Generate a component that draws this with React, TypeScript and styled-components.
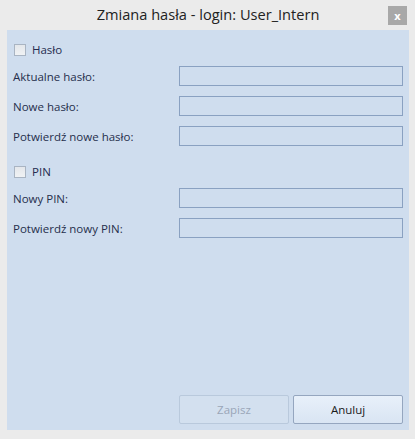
import * as React from 'react';
import styled, { createGlobalStyle } from 'styled-components';

const GlobalStyle = createGlobalStyle`
    html, body {
        margin: 0;
        padding: 0;
        background: #ebebeb;
    }
    body {
        font-family: "Open Sans", "Noto Sans", sans-serif;
    }
`;

const Window = styled.div`
    width: 415px;
    height: 439px;
    background: #ebebeb;
    display: flex;
    flex-direction: column;
    box-sizing: border-box;
    padding: 0 6px 9px 7px;
`;

const TitleBar = styled.div`
    height: 30px;
    display: flex;
    align-items: center;
    justify-content: center;
    position: relative;
`;

const Title = styled.span`
    font-size: 14.6px;
    color: #222222;
    margin-top: -2px;
`;

const CloseButton = styled.div`
    position: absolute;
    right: 2px;
    top: 6px;
    width: 19px;
    height: 19px;
    background: #a8a8a8;
    color: #ffffff;
    font-size: 11px;
    font-weight: 700;
    display: flex;
    align-items: center;
    justify-content: center;
    line-height: 1;
`;

const Panel = styled.div`
    flex: 1;
    background: #cfddee;
    display: flex;
    flex-direction: column;
    padding: 0 6px 6px 6px;
`;

const Section = styled.div<{ $top: number }>`
    display: flex;
    flex-direction: column;
    margin-top: ${p => p.$top}px;
`;

const CheckRow = styled.label`
    display: flex;
    align-items: center;
    gap: 6px;
    height: 13px;
    margin-left: 1px;
    font-size: 11.5px;
    color: #262c4e;
`;

const Box = styled.span`
    width: 10px;
    height: 10px;
    border: 1px solid #a9b4c2;
    background: linear-gradient(#e4e7eb, #f0f2f4);
`;

const Row = styled.div`
    display: flex;
    align-items: center;
    justify-content: space-between;
    height: 20px;
    margin-top: 10px;
`;

const Label = styled.span`
    font-size: 11.5px;
    color: #262f4c;
`;

const Input = styled.div`
    width: 222px;
    height: 18px;
    border: 1px solid #8aa1c1;
    background: #cfddee;
`;

const Footer = styled.div`
    margin-top: auto;
    display: flex;
    justify-content: flex-end;
    gap: 4px;
`;

const Button = styled.div<{ $disabled?: boolean }>`
    width: 108px;
    height: 27px;
    border-radius: 2px;
    border: 1px solid ${p => (p.$disabled ? '#b9c9dc' : '#95a6bf')};
    background: ${p => (p.$disabled ? '#d3e0ef' : 'linear-gradient(#e8f0fa, #d9e5f3)')};
    color: ${p => (p.$disabled ? '#9aa6b8' : '#1a1a1a')};
    font-size: 11.5px;
    display: flex;
    align-items: center;
    justify-content: center;
`;

const hasloFields = ['Aktualne hasło:', 'Nowe hasło:', 'Potwierdź nowe hasło:'];
const pinFields = ['Nowy PIN:', 'Potwierdź nowy PIN:'];

const App: React.FC = () => {
    return (
        <>
            <GlobalStyle />
            <Window>
                <TitleBar>
                    <Title>Zmiana hasła - login: User_Intern</Title>
                    <CloseButton>x</CloseButton>
                </TitleBar>
                <Panel>
                    <Section $top={13}>
                        <CheckRow><Box />Hasło</CheckRow>
                        {hasloFields.map(f => (
                            <Row key={f}>
                                <Label>{f}</Label>
                                <Input />
                            </Row>
                        ))}
                    </Section>
                    <Section $top={19}>
                        <CheckRow><Box />PIN</CheckRow>
                        {pinFields.map(f => (
                            <Row key={f}>
                                <Label>{f}</Label>
                                <Input />
                            </Row>
                        ))}
                    </Section>
                    <Footer>
                        <Button $disabled>Zapisz</Button>
                        <Button>Anuluj</Button>
                    </Footer>
                </Panel>
            </Window>
        </>
    );
};

export default App;
